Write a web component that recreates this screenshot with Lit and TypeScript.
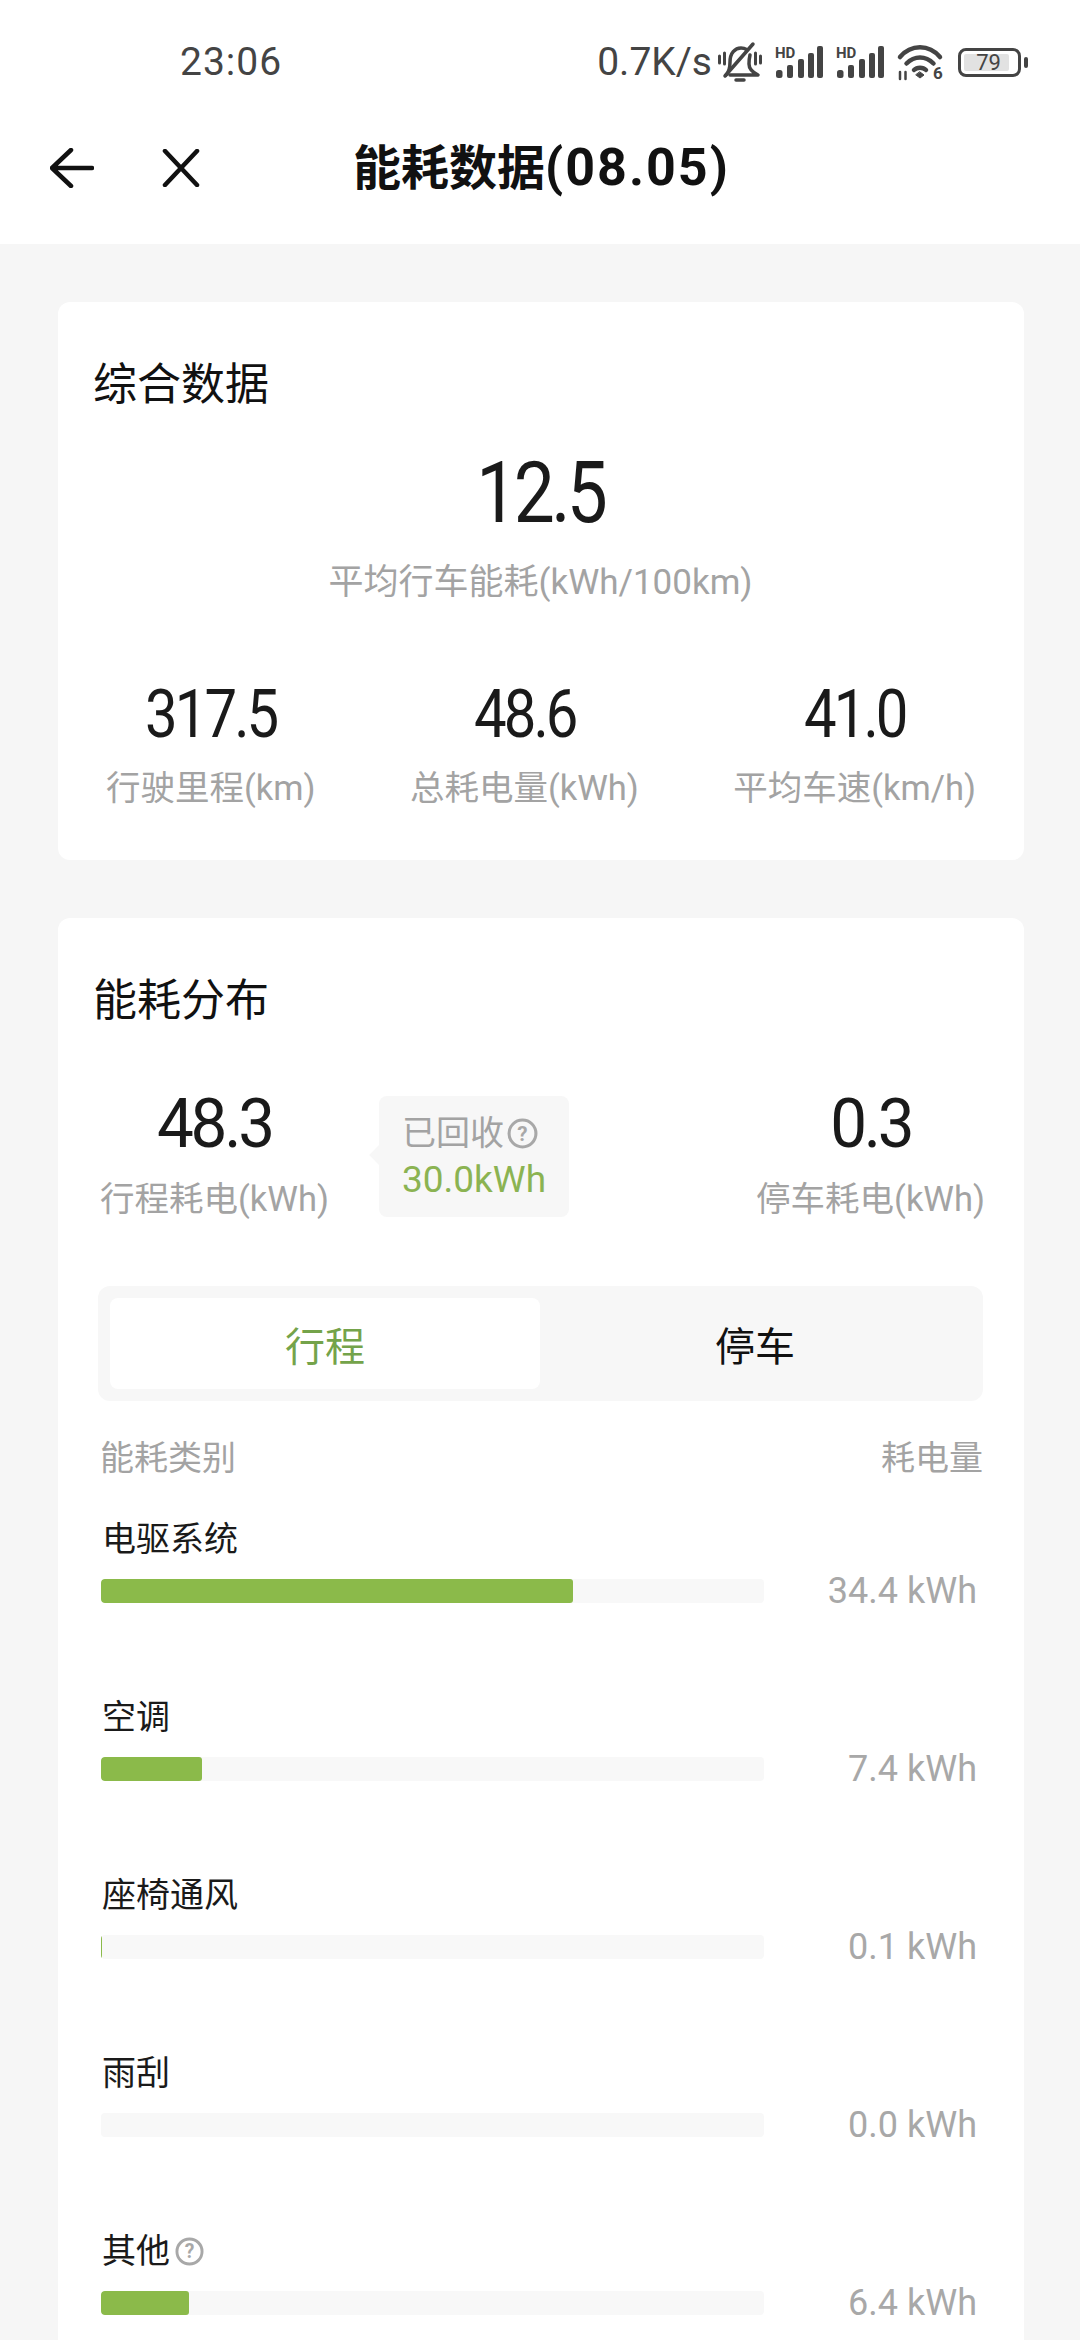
import { LitElement, css, html, svg } from 'lit'
import { customElement, state } from 'lit/decorators.js'

interface EnergyRow {
  name: string
  value: string
  fill: number
  help?: boolean
}

const helpIcon = (size: number) => html`
  <svg class="help" width=${size} height=${size} viewBox="0 0 30 30">
    <circle cx="15" cy="15" r="13" fill="none" stroke="#a8a8a8" stroke-width="3" />
    <text x="15" y="22" text-anchor="middle" font-size="20" font-weight="700" fill="#a8a8a8" font-family="Roboto, sans-serif">?</text>
  </svg>
`

const signalIcon = svg`
  <svg width="48" height="32" viewBox="0 0 48 32" fill="#444">
    <text x="0" y="12" font-size="15" font-weight="700" font-family="Roboto, sans-serif">HD</text>
    <rect x="1" y="24" width="6.500" height="8" rx="2.500" />
    <rect x="12" y="19" width="6" height="13" rx="2" />
    <rect x="23" y="13" width="6" height="19" rx="2" />
    <rect x="33" y="7" width="6" height="25" rx="2" />
    <rect x="42" y="0" width="6" height="32" rx="2" />
  </svg>
`

@customElement('app-root')
export class AppRoot extends LitElement {
  @state() private _rows: EnergyRow[] = [
    { name: '电驱系统', value: '34.4 kWh', fill: 472 },
    { name: '空调', value: '7.4 kWh', fill: 101 },
    { name: '座椅通风', value: '0.1 kWh', fill: 1 },
    { name: '雨刮', value: '0.0 kWh', fill: 0 },
    { name: '其他', value: '6.4 kWh', fill: 88, help: true },
  ]

  #statusBar() {
    return html`
      <div class="status">
        <span class="time">23:06</span>
        <span class="speed">0.7K/s</span>
        <div class="status-icons">
          <svg width="44" height="40" viewBox="0 0 44 40" fill="none" stroke="#444" stroke-width="3.500" stroke-linecap="round" stroke-linejoin="round">
            <path d="M8 33c3-3 4-6 4-13 0-9 5-14 11-14 2 0 4 .5 5.500 1.500" />
            <path d="M32 13c-1 4-1 6-1 9 0 4 3 8 9 11H12" />
            <path d="M35 2 7 34" />
            <path d="M1.500 14v7M6.500 11v11M37.500 11v11M42.500 14v7" stroke-width="3" />
            <path d="M18 38h8" stroke-width="3.500" />
          </svg>
          ${signalIcon}
          ${signalIcon}
          <svg width="46" height="35" viewBox="0 0 46 35" fill="none" stroke="#444" stroke-linecap="round">
            <path d="M3 12C14 -1 32 -1 43 12" stroke-width="4.500" />
            <path d="M9.500 18.500c8-8 19-8 27 0" stroke-width="4.500" />
            <path d="M17 25c3-3 9-3 12 0" stroke-width="4.500" />
            <path d="M23 27l4 3-4 3-4-3z" fill="#444" stroke-width="1" />
            <path d="M3 27v7M8.500 27v7" stroke-width="2.500" />
            <text x="36" y="34" font-size="17" font-weight="700" fill="#444" stroke="none" font-family="Roboto, sans-serif">6</text>
          </svg>
          <span class="battery">
            <span class="battery-body"><span class="battery-level">79</span></span>
            <span class="battery-cap"></span>
          </span>
        </div>
      </div>
    `
  }

  #nav() {
    return html`
      <div class="nav">
        <div class="nav-icons">
          <svg width="44" height="40" viewBox="0 0 44 40" fill="none" stroke="#111" stroke-width="4.500" stroke-linecap="round" stroke-linejoin="round">
            <path d="M42 20H3M21 2 2 20l19 18" />
          </svg>
          <svg width="38" height="38" viewBox="0 0 38 38" fill="none" stroke="#111" stroke-width="4.500" stroke-linecap="round">
            <path d="M3 2l32 34M35 2 3 36" />
          </svg>
        </div>
        <div class="nav-title">能耗数据<span class="nav-date">(08.05)</span></div>
        <div></div>
      </div>
    `
  }

  #stat(value: string, label: string) {
    return html`
      <div class="stat">
        <div class="stat-value"><span class="num">${value}</span></div>
        <div class="label">${label}</div>
      </div>
    `
  }

  #row(row: EnergyRow) {
    return html`
      <div class="row">
        <div class="row-name">${row.name}${row.help ? helpIcon(29) : ''}</div>
        <div class="row-line">
          <div class="track">
            <div class="fill" style="width: ${row.fill}px"></div>
          </div>
          <div class="row-value">${row.value}</div>
        </div>
      </div>
    `
  }

  render() {
    return html`
      <div class="top">
        ${this.#statusBar()}
        ${this.#nav()}
      </div>
      <div class="content">
        <section class="card overview">
          <h2 class="card-title">综合数据</h2>
          <div class="hero"><span class="num">12.5</span></div>
          <div class="label hero-label">平均行车能耗(kWh/100km)</div>
          <div class="stats">
            ${this.#stat('317.5', '行驶里程(km)')}
            ${this.#stat('48.6', '总耗电量(kWh)')}
            ${this.#stat('41.0', '平均车速(km/h)')}
          </div>
        </section>

        <section class="card">
          <h2 class="card-title">能耗分布</h2>
          <div class="split">
            ${this.#stat('48.3', '行程耗电(kWh)')}
            <div class="recovered">
              <div class="recovered-title">已回收${helpIcon(31)}</div>
              <div class="recovered-value">30.0kWh</div>
            </div>
            ${this.#stat('0.3', '停车耗电(kWh)')}
          </div>
          <div class="tabs">
            <div class="tab active">行程</div>
            <div class="tab">停车</div>
          </div>
          <div class="table-head">
            <span>能耗类别</span>
            <span>耗电量</span>
          </div>
          <div class="rows">
            ${this._rows.map((r) => this.#row(r))}
          </div>
        </section>
      </div>
    `
  }

  static styles = css`
    :host {
      display: block;
      width: 1080px;
      height: 2340px;
      overflow: hidden;
      background: #f6f6f6;
      font-family: Roboto, 'Noto Sans CJK SC', sans-serif;
      color: #111;
    }

    .top {
      background: #fff;
      height: 244px;
    }

    .status {
      height: 124px;
      display: flex;
      align-items: center;
      padding: 0 52px 0 180px;
      color: #444;
      font-size: 39px;
    }

    .time {
      letter-spacing: 1px;
      margin-right: auto;
    }

    .speed {
      margin-right: 6px;
    }

    .status-icons {
      display: flex;
      align-items: center;
      gap: 13px;
    }

    .status-icons svg {
      display: block;
      flex: none;
      overflow: visible;
    }

    .battery {
      display: flex;
      align-items: center;
      gap: 3px;
      margin-left: 2px;
    }

    .battery-body {
      width: 63px;
      height: 29px;
      box-sizing: border-box;
      border: 3px solid #444;
      border-radius: 8px;
      padding: 3px;
      display: flex;
    }

    .battery-level {
      width: 41px;
      background: #e2e2e2;
      border-radius: 2px;
      font-size: 22px;
      line-height: 17px;
      text-align: center;
      padding-left: 4px;
    }

    .battery-cap {
      width: 4px;
      height: 11px;
      background: #444;
      border-radius: 2px;
    }

    .nav {
      height: 88px;
      display: grid;
      grid-template-columns: 1fr auto 1fr;
      align-items: center;
      padding: 0 47px 0 50px;
    }

    .nav-icons {
      display: flex;
      align-items: center;
      gap: 68px;
    }

    .nav-title {
      font-size: 48px;
      font-weight: 700;
      line-height: 60px;
      white-space: nowrap;
    }

    .nav-date {
      font-size: 52px;
      letter-spacing: 2px;
    }

    .content {
      display: flex;
      flex-direction: column;
      gap: 58px;
      padding: 58px 56px 0 58px;
    }

    .card {
      background: #fff;
      border-radius: 12px;
      padding: 60px 41px 40px 40px;
    }

    .overview {
      padding-bottom: 50px;
    }

    .card-title {
      margin: 0 0 0 -5px;
      font-size: 44px;
      font-weight: 400;
      line-height: 46px;
    }

    .num {
      display: inline-block;
      letter-spacing: -0.05em;
      transform: scaleX(0.88);
    }

    .hero {
      margin-top: 45px;
      font-size: 86px;
      line-height: 80px;
      text-align: center;
      color: #1a1a1a;
    }

    .hero .num {
      transform: scaleX(0.85);
    }

    .label {
      color: #a3a3a3;
      font-size: 34.5px;
      line-height: 44px;
      white-space: nowrap;
    }

    .hero-label {
      margin-top: 28px;
      font-size: 35px;
      text-align: center;
    }

    .stats {
      display: flex;
      justify-content: space-between;
      margin-top: 78px;
      padding: 0 7px 0 8px;
    }

    .stat {
      text-align: center;
    }

    .stat-value {
      font-size: 66px;
      line-height: 64px;
      color: #1a1a1a;
    }

    .stat .label {
      margin-top: 19px;
    }

    .split {
      display: flex;
      align-items: flex-start;
      margin: 68px -2px 0 0;
      padding-left: 2px;
    }

    .split .stat-value {
      font-size: 69px;
    }

    .split .num {
      transform: scaleX(0.95);
    }

    .split .label {
      margin-top: 21px;
    }

    .recovered {
      position: relative;
      box-sizing: border-box;
      width: 190px;
      height: 121px;
      margin: 4px auto 0 50px;
      padding: 15px 0 0 23px;
      background: #f7f7f7;
      border-radius: 8px;
    }

    .recovered::before {
      content: '';
      position: absolute;
      left: -7px;
      top: 52px;
      width: 14px;
      height: 14px;
      background: #f7f7f7;
      transform: rotate(45deg);
    }

    .recovered-title {
      display: flex;
      align-items: center;
      gap: 3px;
      color: #a3a3a3;
      font-size: 34px;
      line-height: 44px;
    }

    .recovered-value {
      margin-top: 3px;
      color: #8bb352;
      font-size: 37px;
      line-height: 44px;
    }

    .tabs {
      display: grid;
      grid-template-columns: 430px 430px;
      margin-top: 65px;
      padding: 12px;
      height: 115px;
      box-sizing: border-box;
      background: #f7f7f7;
      border-radius: 12px;
    }

    .tab {
      display: flex;
      align-items: center;
      justify-content: center;
      font-size: 40px;
      border-radius: 8px;
      color: #111;
    }

    .tab.active {
      background: #fff;
      color: #74a34a;
    }

    .table-head {
      display: flex;
      justify-content: space-between;
      margin-top: 35px;
      padding-left: 2px;
      color: #a3a3a3;
      font-size: 34px;
      line-height: 44px;
    }

    .rows {
      display: flex;
      flex-direction: column;
      gap: 92px;
      margin-top: 37px;
      padding-left: 3px;
    }

    .row-name {
      display: flex;
      align-items: center;
      gap: 5px;
      font-size: 34px;
      line-height: 44px;
      color: #1a1a1a;
      padding-left: 1px;
    }

    .row-line {
      display: flex;
      align-items: center;
      justify-content: space-between;
      height: 24px;
      margin-top: 18px;
      padding-right: 6px;
    }

    .track {
      width: 663px;
      height: 24px;
      background: #f8f8f8;
      border-radius: 4px;
      overflow: hidden;
    }

    .fill {
      height: 100%;
      background: #8bba4a;
      border-radius: 3px;
    }

    .row-value {
      color: #a8a8a8;
      font-size: 36px;
      line-height: 24px;
      white-space: nowrap;
    }

    .help {
      display: block;
      flex: none;
    }
  `
}

declare global {
  interface HTMLElementTagNameMap {
    'app-root': AppRoot
  }
}
